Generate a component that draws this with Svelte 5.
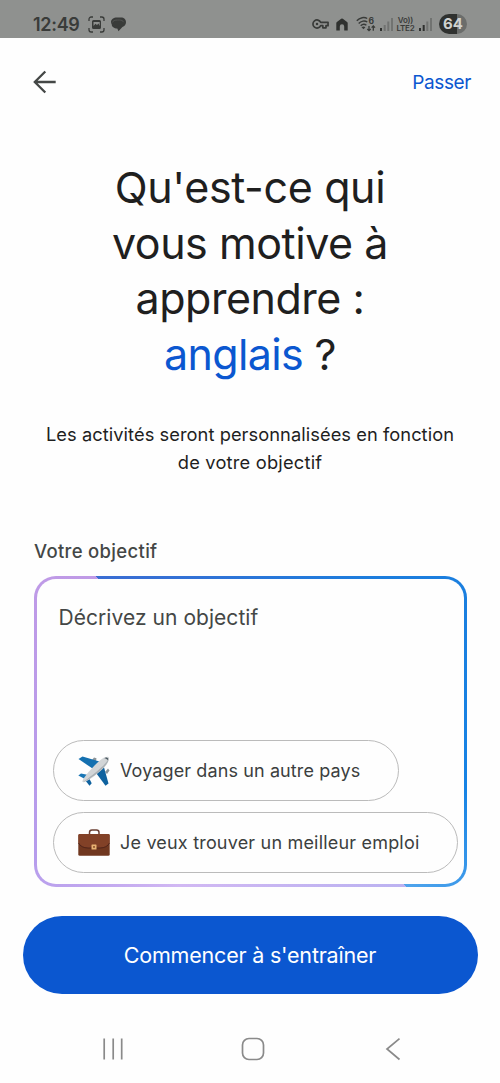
<script>
  let goal = $state('');

  const titleLines = [
    { text: "Qu'est-ce qui", spacing: -0.37 },
    { text: 'vous motive à', spacing: -0.44 },
    { text: 'apprendre :', spacing: -0.47 }
  ];

  const suggestions = [
    { icon: 'plane', text: 'Voyager dans un autre pays' },
    { icon: 'briefcase', text: 'Je veux trouver un meilleur emploi' }
  ];
</script>

<div class="screen">
  <div class="status">
    <span class="clock">12:49</span>
    <svg class="shot" width="17" height="17" viewBox="0 0 17 17" fill="none" stroke="#393b39" stroke-width="1.3">
      <path d="M1 5V3.200A2.200 2.200 0 0 1 3.200 1H5M12 1h1.800A2.200 2.200 0 0 1 16 3.200V5M16 12v1.800A2.200 2.200 0 0 1 13.800 16H12M5 16H3.200A2.200 2.200 0 0 1 1 13.800V12" />
      <path d="M5.500 4h6A1.500 1.500 0 0 1 13 5.500v6a1.500 1.500 0 0 1-1.500 1.500h-6A1.500 1.500 0 0 1 4 11.500v-6A1.500 1.500 0 0 1 5.500 4zM5.500 10l2-2.200 1.500 1.300 1.500-1.600 1.200 2.500V6H5.500z" fill="#393b39" fill-rule="evenodd" stroke="none" />
    </svg>
    <svg class="chat" width="15" height="15" viewBox="0 0 15 15">
      <path d="M6 .5h4c3 0 5 2 5 4.700 0 2.300-1.400 4-3.600 4.700L7.500 14.300 6.300 11.500C3 11.500.7 9.700.7 7.200.1 6.300 0 5.600 0 5 0 2.300 2.500.5 6 .5z" fill="#393b39" />
      <path d="M1 5.700C2 3.700 4 3 6.500 3h2c2 0 3.500.8 4.200 2.200" fill="none" stroke="#616361" stroke-width=".6" />
    </svg>

    <div class="indicators">
      <svg width="17" height="12" viewBox="0 0 18 12" fill="none" stroke="#393b39" stroke-width="1.800">
        <path d="M9.200 4.200A4.300 4.300 0 1 0 9.200 7.800H11.500V10h3.300V7.800H17V4.200z" stroke-linejoin="round" />
        <circle cx="5.300" cy="6" r="1.300" fill="#393b39" stroke="none" />
      </svg>
      <svg class="home" width="12" height="13" viewBox="0 0 12 13">
        <path d="M.3 12.500V5.300Q.3 4.600.9 4.100L5.200.7Q6 .2 6.800.7L11.100 4.100Q11.700 4.600 11.700 5.300V12.500H8.200V8.500A2.200 2.200 0 0 0 3.800 8.500V12.500z" fill="#2f312f" />
      </svg>
      <svg class="wifi" width="20" height="17" viewBox="0 0 20 17" fill="none" stroke="#393b39" stroke-width="1.400">
        <path d="M.8 4.800C3.800 1.300 8.500.8 11.200 2.500M2.700 7.500C5 4.800 8.800 4.300 11.300 6M4.700 9.800C6.500 8 8.700 7.900 10.400 9.200" />
        <path d="M5.500 11.200Q7.500 9.700 9.400 11.200L7.500 13.200z" fill="#393b39" stroke="none" />
        <path d="M13 10v4.500M11.300 13l1.700 1.700 1.700-1.700M17.300 14.800v-4.500M15.600 11.600l1.700-1.700 1.700 1.700" stroke-width="1.300" />
        <text x="12.400" y="8" class="tiny">6</text>
      </svg>
      <svg class="signal" width="13" height="14" viewBox="0 0 13 14" fill="#717371">
        <rect y="11" width="2" height="3" fill="#2f312f" />
        <rect x="3.700" y="8" width="2" height="6" />
        <rect x="7.300" y="4.500" width="2" height="9.500" />
        <rect x="11" y="1" width="2" height="13" />
      </svg>
      <div class="volte"><span>Vo))</span><span>LTE2</span></div>
      <svg class="signal" width="13" height="14" viewBox="0 0 13 14" fill="#717371">
        <rect y="11" width="2" height="3" fill="#2f312f" />
        <rect x="3.700" y="8" width="2" height="6" fill="#2f312f" />
        <rect x="7.300" y="4.500" width="2" height="9.500" />
        <rect x="11" y="1" width="2" height="13" />
      </svg>
      <span class="battery">64</span>
    </div>
  </div>

  <header>
    <button class="back" aria-label="Retour">
      <svg width="24" height="24" viewBox="0 0 24 24" fill="none" stroke="#444746" stroke-width="2.300">
        <path d="M22.700 12H2.500M12.300 1.500L1.800 12l10.500 10.500" />
      </svg>
    </button>
    <button class="skip">Passer</button>
  </header>

  <h1>
    {#each titleLines as line}
      <span class="line" style="letter-spacing: {line.spacing}px">{line.text}</span>
    {/each}
    <span class="line last"><em>anglais</em> ?</span>
  </h1>

  <p class="subtitle">
    <span class="line">Les activités seront personnalisées en fonction</span>
    <span class="line short">de votre objectif</span>
  </p>

  <label for="goal">Votre objectif</label>
  <div class="goal-box">
    <textarea id="goal" placeholder="Décrivez un objectif" bind:value={goal}></textarea>
    {#each suggestions as item}
      <button class="chip {item.icon}" onclick={() => (goal = item.text)}>
        {#if item.icon === 'plane'}
          <svg width="32" height="30" viewBox="0 0 32 30">
            <path d="M14 4l2-2.500 2.500.8-.5 3zM27 16l3-3.500 1.500 2-2.500 3.500z" fill="#8b9499" />
            <path d="M.5 3L4.500.6 21.500 5.500 14.500 12.500z" fill="#1470b0" />
            <path d="M25.500 9.500L30.500 27.500 27.500 29.700 17 15.500z" fill="#0f629f" />
            <path d="M.3 19.500L3 17.500 10.500 19 7 23z" fill="#1976b5" />
            <path d="M10.500 21L13.700 27.300 11.500 29.800 7 24z" fill="#0f629f" />
            <path d="M4.500 25C5.500 21.500 11 15.500 16.500 9.500 22 3.700 27 .2 30 .8 32 2 31 6 27 10.500 21 17 12.500 23.500 6.500 26 5 26.500 4.200 26 4.500 25z" fill="#d2d5d7" />
            <path d="M5.500 26C12 23 21 16.500 26.500 10.500 30 6.500 31.200 3 30.500 1.300 30.500 5 26 9 21 13.500 16 18 9 23 5.500 26z" fill="#aab0b4" />
            <path d="M26.200 2.200Q28.500 1.800 29.500 4.200L30 2.500Q28.500.8 26.200 2.200z" fill="#37474f" />
          </svg>
        {:else}
          <svg width="32" height="27" viewBox="0 0 32 27">
            <path d="M11.500 5.500V3.500Q11.500 1 14 1h4.500Q21 1 21 3.500V5.500" fill="none" stroke="#6b4035" stroke-width="1.500" />
            <rect x=".3" y="5" width="31.400" height="21.700" rx="1.500" fill="#70371f" />
            <path d="M.5 5.500Q1 5 2 5H30Q31.300 5 31.500 5.500V14Q29 18.800 22 19H10Q3 18.800.5 14z" fill="#824127" />
            <path d="M.5 14Q3 18.800 10 19H22Q29 18.800 31.500 14" fill="none" stroke="#4c2118" stroke-width=".9" />
            <rect x="13.500" y="15.500" width="5" height="5" rx=".6" fill="#e8b272" />
            <rect x="15" y="17.200" width="2" height="1.500" fill="#8a4f2a" />
          </svg>
        {/if}
        <span>{item.text}</span>
      </button>
    {/each}
  </div>

  <button class="start"><span>Commencer à s'entraîner</span></button>

  <nav>
    <svg width="24" height="24" viewBox="0 0 24 24" fill="none" stroke="#8a8a8a" stroke-width="1.700">
      <path d="M3.200 1.500v21M12.200 1.500v21M20.700 1.500v21" />
    </svg>
    <svg width="24" height="24" viewBox="0 0 24 24" fill="none" stroke="#8a8a8a" stroke-width="1.700">
      <rect x="1.500" y="1.500" width="21" height="21" rx="6.500" />
    </svg>
    <svg width="24" height="24" viewBox="0 0 24 24" fill="none" stroke="#8a8a8a" stroke-width="1.700">
      <path d="M18.500 1.700L6 12l12.500 10.500" />
    </svg>
  </nav>
</div>

<style>
  :global(body) {
    background: #fff;
  }
  .screen {
    width: 500px;
    height: 1083px;
    display: flex;
    flex-direction: column;
    overflow: hidden;
    background: #fefefe;
    color: #1f1f1f;
    font-family: Inter, 'Open Sans', sans-serif;
  }
  button {
    border: none;
    background: none;
    padding: 0;
    font-family: inherit;
    cursor: pointer;
  }
  svg {
    flex: none;
    display: block;
    overflow: visible;
  }

  .status {
    height: 38px;
    box-sizing: border-box;
    padding: 10px 33px 0 33px;
    display: flex;
    align-items: center;
    background: #8f918f;
    color: #393b39;
  }
  .clock {
    width: 55px;
    font-size: 18px;
    font-weight: 600;
    letter-spacing: -0.3px;
    white-space: nowrap;
  }
  .chat { margin-left: 6px; }
  .indicators {
    margin-left: auto;
    display: flex;
    align-items: center;
  }
  .home { margin-left: 7px; }
  .wifi { margin-left: 8px; }
  .signal { margin-left: 4px; }
  .tiny {
    font: 700 8.5px Inter, sans-serif;
    fill: #393b39;
    stroke: none;
  }
  .volte {
    width: 19px;
    margin-left: 3px;
    display: flex;
    flex-direction: column;
    align-items: center;
    font-size: 8px;
    line-height: 8px;
    font-weight: 600;
    letter-spacing: -0.2px;
  }
  .battery {
    width: 28px;
    height: 20px;
    margin-left: 7px;
    border-radius: 10px;
    background: linear-gradient(90deg, #2f312f 64%, #6b6d6b 64%);
    color: #d0d2d0;
    font-size: 15px;
    line-height: 20px;
    font-weight: 700;
    text-align: center;
  }

  header {
    height: 88px;
    padding: 0 29px 0 33px;
    display: flex;
    justify-content: space-between;
    align-items: center;
  }
  .skip {
    color: #0b57d0;
    font-size: 19px;
    letter-spacing: -0.4px;
  }

  h1 {
    margin: 34px 0 0;
    font-size: 43px;
    line-height: 55.5px;
    font-weight: 400;
    text-align: center;
  }
  .line {
    display: block;
    white-space: nowrap;
  }
  .line.last {
    letter-spacing: -0.65px;
  }
  h1 em {
    color: #0b57d0;
    font-style: normal;
  }
  .subtitle {
    margin: 38px 0 0;
    font-size: 18.3px;
    line-height: 28px;
    letter-spacing: 0.05px;
    text-align: center;
  }
  .line.short {
    letter-spacing: 0.2px;
  }
  label {
    margin: 63px 0 0 34px;
    font-size: 18.5px;
    line-height: 24px;
    font-weight: 500;
    letter-spacing: 0.32px;
    color: #444746;
  }

  /* Two colour ring: blue on the top right half, purple on the bottom left */
  .goal-box {
    width: 433px;
    height: 311px;
    box-sizing: border-box;
    margin: 13px 0 0 33.500px;
    padding: 0 0 0 16.500px;
    display: flex;
    flex-direction: column;
    align-items: flex-start;
    border: 3px solid transparent;
    border-radius: 22px;
    background:
      linear-gradient(#fefefe, #fefefe) padding-box,
      conic-gradient(from -45deg, #3a6dd3 0deg, #1c7ddd 85deg, #1683e5 150deg, #4fa4ec 180deg, #bcb2f1 180deg, #d1b8f3 250deg, #b69cec 285deg, #c09ae6 360deg) border-box;
  }
  textarea {
    width: 400px;
    height: 161px;
    box-sizing: border-box;
    padding: 25px 0 0 5.5px;
    border: none;
    outline: none;
    resize: none;
    background: none;
    font: 400 21px/28px Inter, sans-serif;
    letter-spacing: 0.05px;
    color: #444746;
  }
  textarea::placeholder {
    color: #444746;
  }
  .chip {
    height: 61px;
    box-sizing: border-box;
    padding-left: 24px;
    display: flex;
    align-items: center;
    gap: 10px;
    border: 1.500px solid #bbb;
    border-radius: 31px;
    color: #3c3f3e;
    font-size: 18px;
    letter-spacing: 0.11px;
    white-space: nowrap;
  }
  .chip.plane { width: 346px; }
  .chip.briefcase {
    width: 405px;
    margin-top: 11px;
    letter-spacing: 0.19px;
  }

  .start {
    width: 455px;
    height: 78px;
    margin: 29px 0 0 22.500px;
    border-radius: 39px;
    background: #0b57d0;
    color: #fff;
    font-size: 21.500px;
    letter-spacing: -0.2px;
  }

  nav {
    margin-top: 43px;
    padding: 0 95px 0 101px;
    display: flex;
    justify-content: space-between;
  }
</style>
